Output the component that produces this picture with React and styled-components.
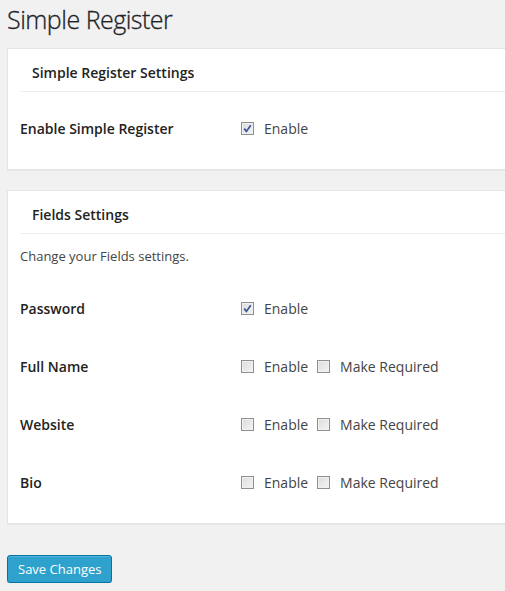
import React from "react";
import styled, { createGlobalStyle } from "styled-components";

const GlobalStyle = createGlobalStyle`
  html, body {
    margin: 0;
    padding: 0;
    background: #f1f1f1;
    overflow: hidden;
  }
  body {
    font-family: "Open Sans", "Liberation Sans", sans-serif;
    color: #222;
    font-size: 13px;
  }
`;

const Wrap = styled.div`
  padding: 5px 0 0 7px;
`;

const Title = styled.h1`
  margin: 0 0 14px;
  font-size: 25px;
  font-weight: 300;
  letter-spacing: -0.5px;
  line-height: 29px;
  color: #1d2327;
  -webkit-text-stroke: 0.3px #1d2327;
`;

const Panel = styled.div`
  background: #fff;
  border: 1px solid #e5e5e5;
  box-shadow: 0 1px 1px rgba(0, 0, 0, 0.04);
  margin-right: -20px;
  margin-bottom: 20px;
  padding: 0 12px 12px;
`;

const PanelTitle = styled.h3`
  margin: 0;
  padding: 14px 12px 8px;
  font-size: 14px;
  font-weight: 600;
  line-height: 20px;
  color: #222;
  border-bottom: 1px solid #eee;
`;

const Description = styled.p`
  margin: 12px 0 5px;
  font-size: 13px;
  line-height: 20px;
  color: #444;
`;

const Rows = styled.div`
  margin-top: ${(p) => (p.$tight ? "13px" : "7px")};
`;

const Row = styled.div`
  display: grid;
  grid-template-columns: 221px auto;
  align-items: center;
  height: 58px;
`;

const Label = styled.div`
  font-size: 14px;
  font-weight: 600;
  color: #222;
`;

const Options = styled.div`
  display: flex;
  align-items: center;
`;

const Option = styled.label`
  display: flex;
  align-items: center;
  font-size: 14px;
  color: #444;
  margin-right: 9px;
`;

const Box = styled.span`
  box-sizing: border-box;
  width: 13px;
  height: 13px;
  margin-right: 10px;
  border: 1px solid #8f8f8f;
  background: linear-gradient(135deg, #dcdcdc 0%, #f4f4f4 100%);
  box-shadow: inset 0 0 0 1px #f0f0f0;
  display: flex;
  align-items: center;
  justify-content: center;
`;

const Button = styled.button`
  margin-top: 11px;
  height: 28px;
  padding: 0 10px 1px;
  font-family: "Open Sans", "Liberation Sans", sans-serif;
  font-size: 13px;
  color: #fff;
  background: #2ea2cc;
  border: 1px solid #0074a2;
  border-radius: 3px;
  box-shadow: inset 0 1px 0 rgba(120, 200, 230, 0.5), 0 1px 0 rgba(0, 0, 0, 0.15);
  cursor: pointer;
`;

const Check = ({ checked, children }) => (
  <Option>
    <Box>
      {checked && (
        <svg width="9" height="9" viewBox="0 0 9 9">
          <path d="M1.2 4.6 L3.4 7.4 L7.8 1.2" fill="none" stroke="#3b5596" strokeWidth="1.7" />
        </svg>
      )}
    </Box>
    {children}
  </Option>
);

const fields = [
  { name: "Password", enabled: true, required: false },
  { name: "Full Name", enabled: false, required: true },
  { name: "Website", enabled: false, required: true },
  { name: "Bio", enabled: false, required: true },
];

export default function App() {
  return (
    <>
      <GlobalStyle />
      <Wrap>
        <Title>Simple Register</Title>
        <Panel>
          <PanelTitle>Simple Register Settings</PanelTitle>
          <Rows>
            <Row>
              <Label>Enable Simple Register</Label>
              <Options>
                <Check checked>Enable</Check>
              </Options>
            </Row>
          </Rows>
        </Panel>
        <Panel>
          <PanelTitle>Fields Settings</PanelTitle>
          <Description>Change your Fields settings.</Description>
          <Rows $tight>
            {fields.map((f) => (
              <Row key={f.name}>
                <Label>{f.name}</Label>
                <Options>
                  <Check checked={f.enabled}>Enable</Check>
                  {f.required && <Check>Make Required</Check>}
                </Options>
              </Row>
            ))}
          </Rows>
        </Panel>
        <Button>Save Changes</Button>
      </Wrap>
    </>
  );
}
